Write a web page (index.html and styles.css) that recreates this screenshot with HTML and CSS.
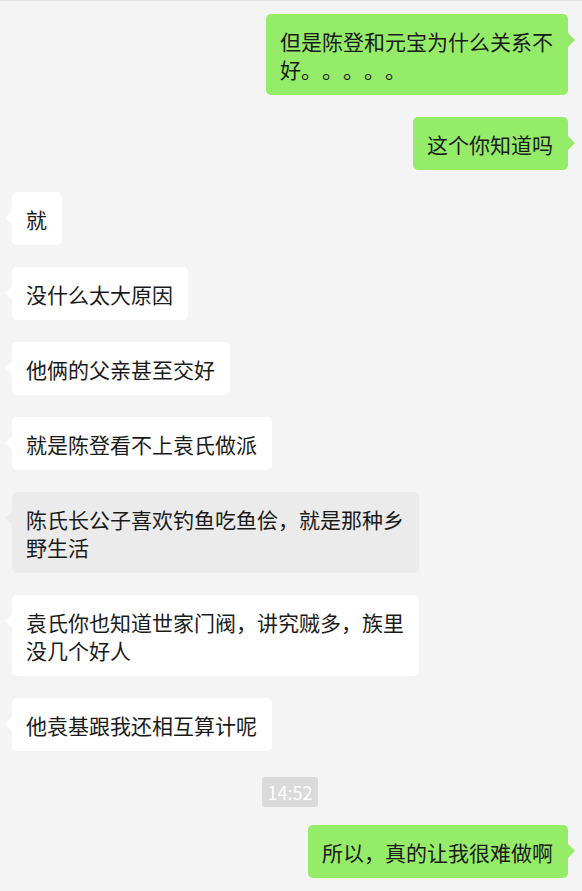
FILE: index.html
```html
<!DOCTYPE html>
<html lang="zh-CN">
<head>
    <meta charset="UTF-8">
    <meta name="viewport" content="width=device-width, initial-scale=1.0">
    <title>聊天记录</title>
    <link rel="stylesheet" href="styles.css">
</head>
<body>

    <div class="topbar"></div>

    <div class="chat">
        <!-- my messages on the right, theirs on the left -->
        <div class="msg me">
            <div class="bubble">但是陈登和元宝为什么关系不<br>好。。。。。</div>
        </div>
        <div class="msg me">
            <div class="bubble">这个你知道吗</div>
        </div>

        <div class="msg other">
            <div class="bubble">就</div>
        </div>
        <div class="msg other">
            <div class="bubble">没什么太大原因</div>
        </div>
        <div class="msg other">
            <div class="bubble">他俩的父亲甚至交好</div>
        </div>
        <div class="msg other">
            <div class="bubble">就是陈登看不上袁氏做派</div>
        </div>
        <div class="msg other">
            <div class="bubble hover">陈氏长公子喜欢钓鱼吃鱼侩，就是那种乡野生活</div>
        </div>
        <div class="msg other">
            <div class="bubble">袁氏你也知道世家门阀，讲究贼多，族里没几个好人</div>
        </div>
        <div class="msg other">
            <div class="bubble">他袁基跟我还相互算计呢</div>
        </div>

        <div class="time"><span>14:52</span></div>

        <div class="msg me">
            <div class="bubble">所以，真的让我很难做啊</div>
        </div>
    </div>

    <div class="bottombar"></div>

</body>
</html>
```

FILE: styles.css
```css
/* Chat window */
html, body {
    height: 100%;
}

body {
    margin: 0;
    background-color: #f4f4f4;
    font-family: "Noto Sans CJK SC", "Noto Sans", sans-serif;
    color: #1a1a1a;
    overflow: hidden;
    display: flex;
    flex-direction: column;
}

.topbar {
    height: 3px;
    background-color: #f7f7f7;
    border-bottom: 1px solid #e2e2e2;
}

.chat {
    flex: 1;
    padding: 13px 14px 0 12px;
}

.msg {
    display: flex;
    margin-bottom: 22px;
}

.msg.me {
    justify-content: flex-end;
}

.msg.other {
    justify-content: flex-start;
}

.bubble {
    position: relative;
    max-width: 378px;
    padding: 13px 15px 12px 14px;
    font-size: 21px;
    line-height: 28px;
    border-radius: 5px;
    background-color: #fff;
    text-spacing-trim: space-all;
}

/* little arrow on the side of each bubble */
.bubble::before {
    content: "";
    position: absolute;
    top: 19px;
    border-top: 7px solid transparent;
    border-bottom: 7px solid transparent;
}

.other .bubble::before {
    left: -7px;
    border-right: 7px solid #fff;
}

.other .bubble.hover {
    background-color: #ebebeb;
}

.other .bubble.hover::before {
    border-right-color: #ebebeb;
}

.me .bubble {
    background-color: #95ec69;
}

.me .bubble::before {
    right: -7px;
    border-left: 7px solid #95ec69;
}

.time {
    display: flex;
    justify-content: center;
    margin: 26px 0 18px;
}

.time span {
    padding: 0 6px;
    height: 30px;
    line-height: 30px;
    font-size: 18px;
    color: #fff;
    background-color: #dadada;
    border-radius: 3px;
}

.bottombar {
    height: 6px;
    border-top: 3px solid #e9e9e9;
    background-color: #f6f6f6;
}
```
